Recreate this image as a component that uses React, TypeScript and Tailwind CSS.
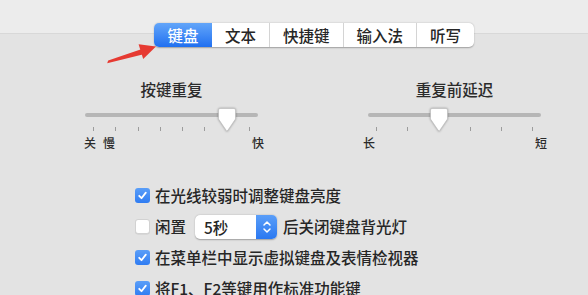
import React from 'react';

const font = { fontFamily: '"Noto Sans CJK SC", "Noto Sans", sans-serif' };

const tabs = ['键盘', '文本', '快捷键', '输入法', '听写'];

const Thumb = () => (
  <svg width="20" height="26" viewBox="0 0 20 26" className="drop-shadow-[0_0.5px_1px_rgba(0,0,0,0.35)]">
    <path d="M3 1.5 H17 Q18.5 1.5 18.5 3 V12 L10 24.5 L1.5 12 V3 Q1.5 1.5 3 1.5 Z" fill="#ffffff" stroke="#b8b8b8" strokeWidth="0.6" />
  </svg>
);

const Slider = ({
  title,
  ticks,
  thumbIndex,
  left,
  right,
  labelMargins,
}: {
  title: string;
  ticks: number;
  thumbIndex: number;
  left: React.ReactNode;
  right: string;
  labelMargins: string;
}) => {
  const pct = thumbIndex / (ticks - 1);
  return (
    <div className="w-[173px] flex flex-col">
      <div className="h-[20px] leading-[20px] text-center text-[15.5px] font-medium text-[#2b2b2b]">{title}</div>
      <div className="relative mt-[9px]">
        <div className="mt-[5px] h-[4px] rounded-full bg-[#b6b6b6]" />
        <div className="mt-[10px] h-[4px] px-[8px] flex justify-between">
          {Array.from({ length: ticks }).map((_, i) => (
            <div key={i} className="w-px h-[4px] bg-[#9c9c9c]" />
          ))}
        </div>
        <div className="absolute top-[-1px]" style={{ left: `${pct * (173 - 18) - 1}px` }}>
          <Thumb />
        </div>
      </div>
      <div className={`mt-[5px] h-[14px] flex justify-between text-[12px] font-medium leading-[14px] text-[#2b2b2b] ${labelMargins}`}>
        <div>{left}</div>
        <div>{right}</div>
      </div>
    </div>
  );
};

const Check = ({ checked }: { checked: boolean }) =>
  checked ? (
    <div className="w-[15px] h-[15px] rounded-[3px] bg-gradient-to-b from-[#5a9ef8] to-[#2f7cf2] flex items-center justify-center shrink-0">
      <svg width="11" height="11" viewBox="0 0 11 11">
        <path d="M2.2 5.8 L4.5 8.2 L8.8 2.6" fill="none" stroke="#fff" strokeWidth="1.8" strokeLinecap="round" strokeLinejoin="round" />
      </svg>
    </div>
  ) : (
    <div className="w-[15px] h-[15px] rounded-[3px] bg-white border border-[#d2d2d2] shadow-[0_0.5px_0.5px_rgba(0,0,0,0.1)] shrink-0" />
  );

export default function App() {
  return (
    <div className="relative w-[588px] h-[295px] overflow-hidden bg-[#e3e3e3]" style={font}>
      <div className="h-[34px] bg-[#ececec] border-b border-[#d8d8d8]" />

      <div className="-mt-[11px] pl-[154px] flex">
        <div className="flex h-[24px] rounded-[5px] bg-white shadow-[0_0.5px_1.5px_rgba(0,0,0,0.3)] text-[15.5px] font-medium leading-[24px] text-[#262626]">
          {tabs.map((t, i) => (
            <div
              key={t}
              className={
                i === 0
                  ? 'px-[13.5px] rounded-l-[5px] bg-gradient-to-b from-[#62a5f9] to-[#1f6ff0] text-white'
                  : `px-[13px] ${i < tabs.length - 1 ? 'border-r border-[#d4d4d4]' : ''}`
              }
            >
              {t}
            </div>
          ))}
        </div>
      </div>

      <div className="mt-[32px] pl-[85px] flex gap-[110px]">
        <Slider
          title="按键重复"
          ticks={8}
          thumbIndex={6}
          left={
            <span className="flex gap-[7px]">
              <span>关</span>
              <span>慢</span>
            </span>
          }
          right="快"
          labelMargins="-ml-[1px] -mr-[6px]"
        />
        <Slider title="重复前延迟" ticks={6} thumbIndex={2} left="长" right="短" labelMargins="-ml-[5px] -mr-[6px]" />
      </div>

      <div className="mt-[30px] pl-[135px] flex flex-col text-[15.5px] font-medium text-[#262626]">
        <div className="h-[31px] flex items-center gap-[5px]">
          <Check checked />
          <span>在光线较弱时调整键盘亮度</span>
        </div>
        <div className="h-[31px] flex items-center">
          <Check checked={false} />
          <span className="ml-[5px]">闲置</span>
          <div className="ml-[9px] w-[82px] h-[24px] flex rounded-[5px] bg-white shadow-[0_0.5px_1.5px_rgba(0,0,0,0.3)]">
            <span className="flex-1 pl-[9px] leading-[24px]">5秒</span>
            <div className="w-[21px] rounded-r-[5px] bg-gradient-to-b from-[#5a9ef8] to-[#2a78f1] flex items-center justify-center">
              <svg width="10" height="16" viewBox="0 0 10 16">
                <path d="M2 6 L5 3 L8 6 M2 10 L5 13 L8 10" fill="none" stroke="#fff" strokeWidth="1.5" strokeLinecap="round" strokeLinejoin="round" />
              </svg>
            </div>
          </div>
          <span className="ml-[6px]">后关闭键盘背光灯</span>
        </div>
        <div className="h-[31px] flex items-center gap-[5px]">
          <Check checked />
          <span>在菜单栏中显示虚拟键盘及表情检视器</span>
        </div>
        <div className="h-[31px] flex items-center gap-[5px]">
          <Check checked />
          <span>将F1、F2等键用作标准功能键</span>
        </div>
      </div>

      <svg className="absolute left-0 top-0 pointer-events-none" width="588" height="295">
        <polygon points="107.2,63.2 108.2,60.6 141.2,49.2 142.6,54.6" fill="#e63a32" />
        <polygon points="156,46.5 143.2,59 138.6,44.2" fill="#e63a32" />
      </svg>
    </div>
  );
}
